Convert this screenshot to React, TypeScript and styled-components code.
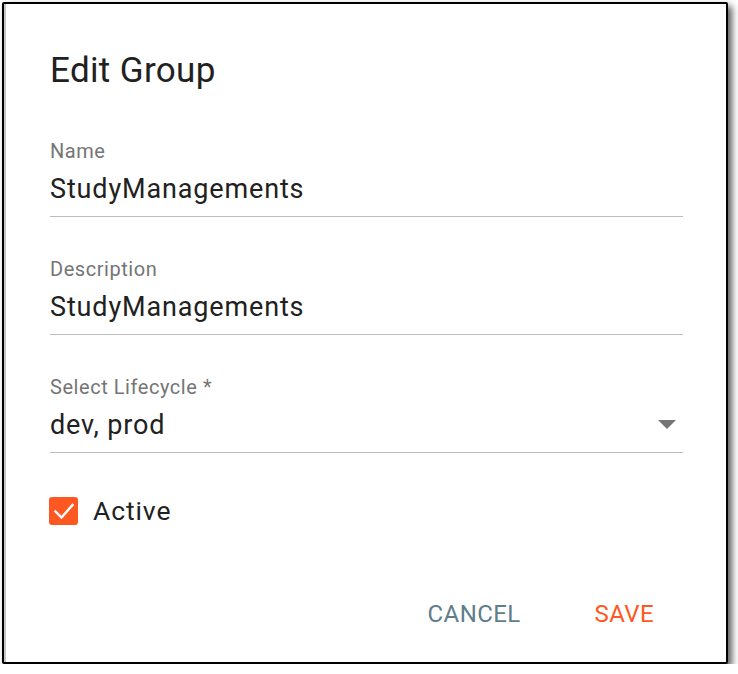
import React from "react";
import styled, { createGlobalStyle } from "styled-components";

const Global = createGlobalStyle`
  html, body { margin: 0; padding: 0; background: #ffffff; }
  body { font-family: Roboto, "Noto Sans", Arial, sans-serif; }
  * { box-sizing: border-box; }
`;

const Frame = styled.div`
  margin: 2px 0 0 2px;
  width: 726px;
  height: 662px;
  border: 2px solid #000000;
  border-radius: 2px;
  background: #ffffff;
  box-shadow: 4px 4px 7px rgba(0, 0, 0, 0.65), inset 2px 0 0 #c4c4c4;
  display: flex;
  flex-direction: column;
  padding: 47px 43px 0 46px;
`;

const Title = styled.h2`
  margin: 0;
  font-size: 35px;
  line-height: 40px;
  font-weight: 400;
  letter-spacing: 0.35px;
  color: #212121;
`;

const Fields = styled.div`
  display: flex;
  flex-direction: column;
  gap: 40px;
  margin-top: 48px;
`;

const Field = styled.div`
  display: flex;
  flex-direction: column;
  border-bottom: 1px solid #bdbdbd;
  padding-bottom: 9px;
`;

const Label = styled.label`
  font-size: 20px;
  line-height: 24px;
  letter-spacing: 0.55px;
  color: #757575;
  margin-bottom: 8px;
`;

const ValueRow = styled.div`
  display: flex;
  align-items: center;
  justify-content: space-between;
  height: 36px;
`;

const Value = styled.span`
  font-size: 27px;
  line-height: 36px;
  letter-spacing: 0.85px;
  color: #212121;
`;

const Arrow = styled.svg`
  width: 18px;
  height: 9px;
  margin-right: 7px;
  margin-top: -1px;
`;

const CheckRow = styled.div`
  display: flex;
  align-items: center;
  gap: 15px;
  margin-top: 44px;
`;

const Box = styled.span`
  width: 29px;
  height: 28px;
  margin-left: -1px;
  border-radius: 3px;
  background: #ff5722;
  display: flex;
  align-items: center;
  justify-content: center;
`;

const CheckLabel = styled.span`
  font-size: 26.5px;
  line-height: 28px;
  letter-spacing: 0.9px;
  color: #212121;
`;

const Actions = styled.div`
  display: flex;
  justify-content: flex-end;
  gap: 74px;
  margin-top: 75px;
  padding-right: 29px;
`;

const Button = styled.button<{ $tone: string }>`
  background: none;
  border: none;
  padding: 0;
  font-family: Roboto, "Noto Sans", Arial, sans-serif;
  font-size: 24px;
  line-height: 28px;
  font-weight: 400;
  letter-spacing: 0.4px;
  color: ${(p) => p.$tone};
  cursor: pointer;
`;

export default function App() {
  return (
    <>
      <Global />
      <Frame>
        <Title>Edit Group</Title>
        <Fields>
          <Field>
            <Label>Name</Label>
            <ValueRow>
              <Value>StudyManagements</Value>
            </ValueRow>
          </Field>
          <Field>
            <Label>Description</Label>
            <ValueRow>
              <Value>StudyManagements</Value>
            </ValueRow>
          </Field>
          <Field>
            <Label>Select Lifecycle *</Label>
            <ValueRow>
              <Value>dev, prod</Value>
              <Arrow viewBox="0 0 18 9">
                <polygon points="0,0 18,0 9,9" fill="#757575" />
              </Arrow>
            </ValueRow>
          </Field>
        </Fields>
        <CheckRow>
          <Box>
            <svg width="24" height="24" viewBox="0 0 24 24">
              <path d="M3.5 12.5 L9.5 18.5 L20.5 6" fill="none" stroke="#ffffff" strokeWidth="2.4" strokeLinecap="square" />
            </svg>
          </Box>
          <CheckLabel>Active</CheckLabel>
        </CheckRow>
        <Actions>
          <Button $tone="#607d8b">CANCEL</Button>
          <Button $tone="#ff5722">SAVE</Button>
        </Actions>
      </Frame>
    </>
  );
}
